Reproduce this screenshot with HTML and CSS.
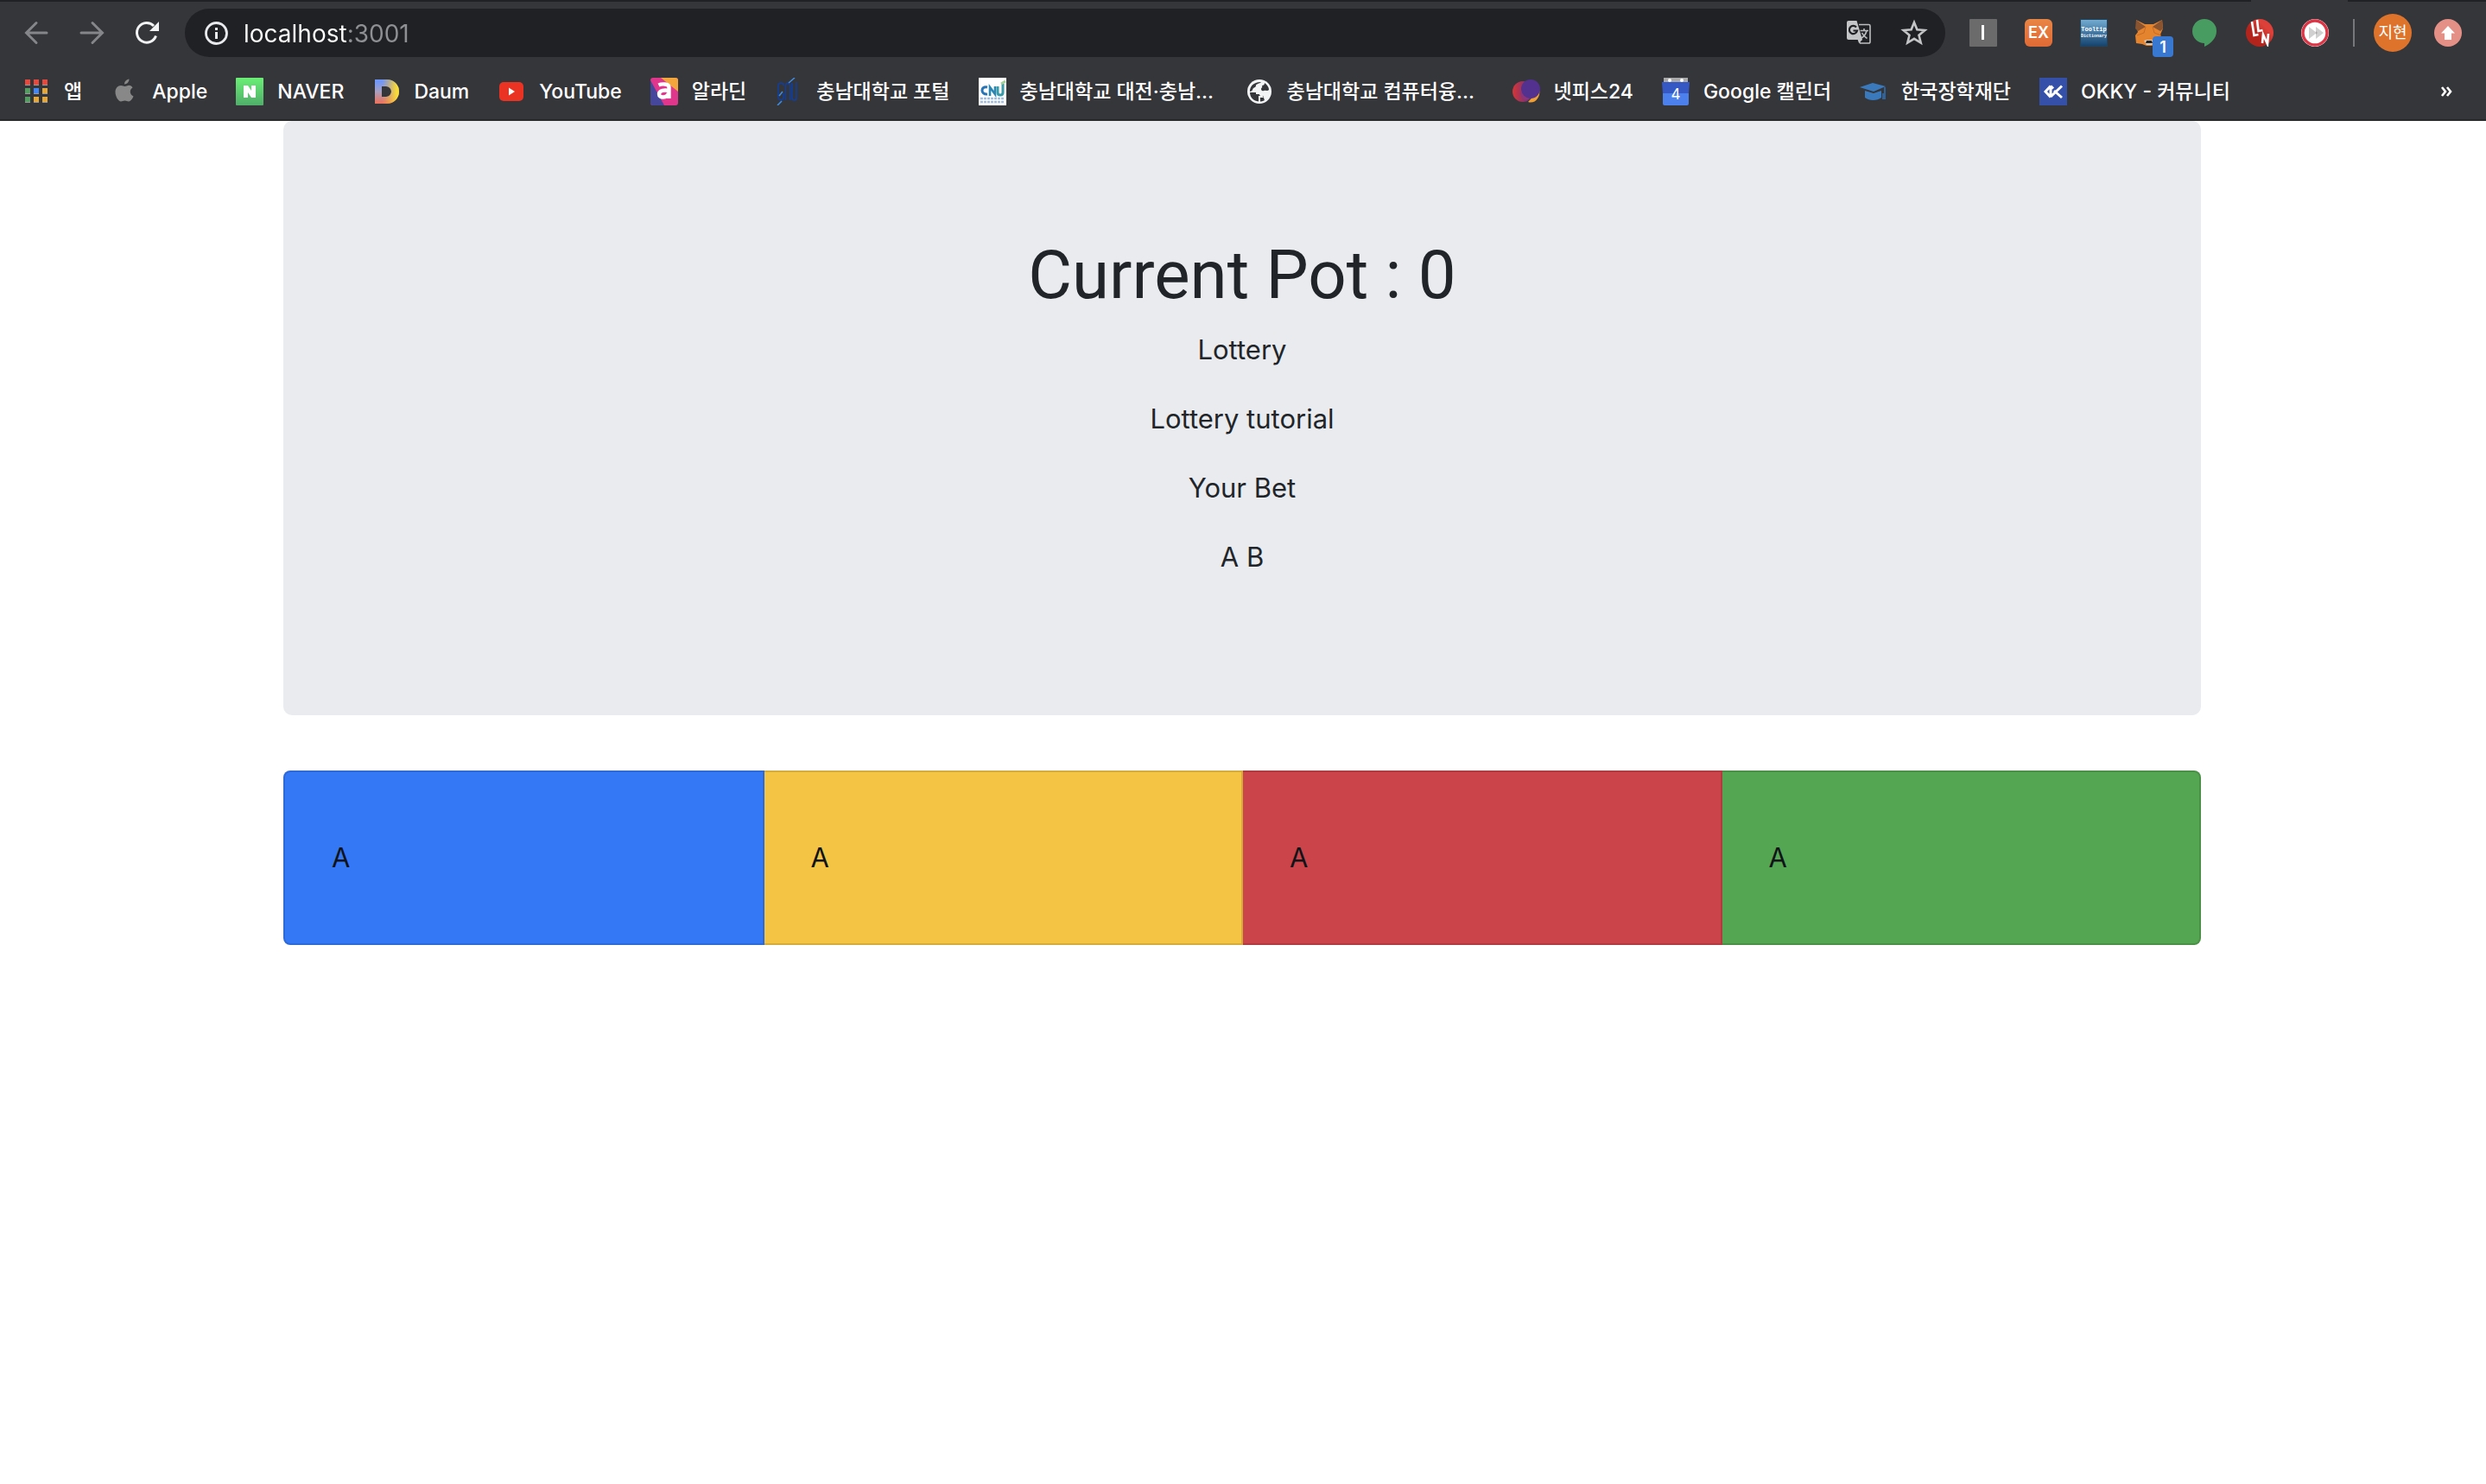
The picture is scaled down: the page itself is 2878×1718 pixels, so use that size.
FILE: index.html
```html
<!DOCTYPE html>
<html lang="ko">
<head>
<meta charset="utf-8">
<meta name="viewport" content="width=device-width, initial-scale=1">
<title>Lottery</title>
<link rel="stylesheet" href="styles.css">
</head>
<body>
<header class="browser">
  <div class="tabstrip"><div class="tab"></div></div>
  <div class="toolbar">
    <div class="nav">
      <button class="icon-btn" type="button" aria-label="Back"><svg class="icon dim" viewBox="0 0 32 32"><path d="M28 16H5M16 4.500 4.500 16 16 27.500"/></svg></button>
      <button class="icon-btn" type="button" aria-label="Forward"><svg class="icon dim" viewBox="0 0 32 32"><path d="M4 16h24M17 4.500 28.500 16 17 27.500"/></svg></button>
      <button class="icon-btn" type="button" aria-label="Reload"><svg class="icon" viewBox="0 0 32 32"><path d="M26.500 19.500A11.300 11.300 0 1 1 24 8" fill="none" stroke="#f1f3f4" stroke-width="3"/><path d="M30 3v11H19z" fill="#f1f3f4"/></svg></button>
    </div>
    <form class="omnibox">
      <button class="icon-btn" type="button" aria-label="Site information"><svg class="icon" viewBox="0 0 32 32"><circle cx="16.500" cy="16.500" r="12" fill="none" stroke="#e8eaed" stroke-width="2.800"/><path d="M15 10h3v3h-3zM15 15h3v8h-3z" fill="#e8eaed"/></svg></button>
      <input class="url" type="text" aria-label="Address" value="localhost:3001">
      <button class="icon-btn" type="button" aria-label="Translate"><svg class="icon" viewBox="0 0 32 32"><path d="M16 6.500h11.500a1.500 1.500 0 0 1 1.500 1.500v18.500a1.500 1.500 0 0 1-1.500 1.500H17.500l-2.500-5" fill="none" stroke="#bdbec0" stroke-width="1.600"/><path d="M4 2h9.500l6.500 22H4a2 2 0 0 1-2-2V4a2 2 0 0 1 2-2z" fill="#c4c5c7"/><path d="M13 9.500a4.600 4.600 0 1 0 1 4H9.500" fill="none" stroke="#202124" stroke-width="2.200"/><path d="M17.500 13.500H27M22 11v2.500M25 13.500c-1 4-3.500 7-6 8.500M19.500 16c1.500 3 3.500 5 6 6.500" fill="none" stroke="#bdbec0" stroke-width="1.600"/><path d="M15 24h5l-4 4z" fill="#c4c5c7"/></svg></button>
      <button class="icon-btn" type="button" aria-label="Bookmark this page"><svg class="icon" viewBox="0 0 32 32"><path d="m16 4 3.400 8.300 9 .7-6.900 5.800 2.200 8.700L16 22.800l-7.700 4.700 2.200-8.700L3.600 13l9-.7z" fill="none" stroke="#c4c5c7" stroke-width="2.600"/></svg></button>
    </form>
    <div class="extensions">
      <button class="icon-btn" type="button" aria-label="I"><svg class="icon" viewBox="0 0 32 32"><rect width="32" height="32" rx="1" fill="#6b6b6b"/><path d="M14 7h3v17h-3z" fill="#fff"/></svg></button>
      <button class="icon-btn ex" type="button">EX</button>
      <button class="icon-btn tip" type="button"><span>Tooltip</span><small>Dictionary</small></button>
      <button class="icon-btn fox" type="button" aria-label="MetaMask"><svg class="icon" viewBox="0 0 32 32"><path d="M1 1l10 5h10l10-5 1 10-3 7 2 9-7 2-5 2h-6l-5-2-7-1-1-9 3-4-2-6z" fill="#e5842f"/><path d="M1 1l11 8-9 5-3-3zM31 1l-11 8 9 5 3-3z" fill="#8a5430"/><path d="m12 9-2 7-8 3M20 9l2 7 8 3" fill="none" stroke="#c86a24"/><path d="M10 25l3 5h6l3-5-3-1h-6z" fill="#d8c8b8"/><path d="M13 25h6l1 3h-8z" fill="#222"/></svg><span class="badge">1</span></button>
      <button class="icon-btn" type="button" aria-label="Hangouts"><svg class="icon" viewBox="0 0 32 32"><path d="M16 0a14 14 0 0 1 14 14c0 8-6 14-14 18v-4A14 14 0 0 1 16 0z" fill="#489c61"/></svg></button>
      <button class="icon-btn" type="button" aria-label="LLN"><svg class="icon" viewBox="0 0 32 32"><defs><linearGradient id="lln" x1="1" y1="0" x2="0" y2="1"><stop offset=".3" stop-color="#dc4038"/><stop offset=".6" stop-color="#b3241c"/></linearGradient></defs><circle cx="16" cy="16" r="16" fill="url(#lln)"/><path d="m7 3 2.500 16 5-1M13 1l1.500 13 5-1M19 28l1-10 5 11 1-12" fill="none" stroke="#fff" stroke-width="2.600"/></svg></button>
      <button class="icon-btn" type="button" aria-label="Skip"><svg class="icon" viewBox="0 0 32 32"><circle cx="16" cy="16" r="16" fill="#fff"/><circle cx="16" cy="16" r="14" fill="#fff" stroke="#dc3545" stroke-width="3.400"/><path d="m9 9 9 7-9 7z" fill="#d0d0d0"/><path d="m17 9 9 7-9 7z" fill="#d0d0d0"/><path d="m17 14 2 2-2 2z" fill="#aaa"/></svg></button>
    </div>
    <div class="profile">
      <button class="avatar" type="button">지현</button>
      <button class="icon-btn" type="button" aria-label="Update"><svg class="icon" viewBox="0 0 32 32"><circle cx="16" cy="16" r="16" fill="#e49086"/><path d="m16 8 8 8.500h-4V24h-8v-7.500H8z" fill="#fff"/></svg></button>
    </div>
  </div>
  <nav class="bookmarks" aria-label="Bookmarks">
    <a class="bookmark" href="#"><svg class="icon" viewBox="0 0 32 32"><path d="M3 8h6v1H3zM13 8h6v1h-6zM23 8h6v1h-6zM3 18h6v1H3zM13 18h6v1h-6zM23 18h6v1h-6zM3 28h6v1H3zM13 28h6v1h-6zM23 28h6v1h-6z" fill="#999"/><path d="M3 2h6v6H3zM13 2h6v6h-6zM23 2h6v6h-6z" fill="#e8493e"/><path d="M3 12h6v6H3zM3 22h6v6H3z" fill="#549d60"/><path d="M13 12h6v6h-6z" fill="#4285f4"/><path d="M23 12h6v6h-6zM13 22h6v6h-6zM23 22h6v6h-6z" fill="#e5a73a"/></svg><span>앱</span></a>
    <a class="bookmark" href="#"><svg class="icon" viewBox="0 0 32 32"><path d="M21.500 1.500c.2 3-2.500 6-5.500 6 0-3 2.500-5.700 5.500-6zM25.500 11.500c-4 2.500-3.500 8 1 10-1.500 3.500-3.500 6-5.500 6-1.800 0-2.500-1-4.500-1s-3 1-4.500 1c-3 0-6.500-6-6.500-11 0-4.500 3-7.500 6.500-7.500 2 0 3.200 1 4.500 1s3-1.300 5-1.300c1.600 0 3 .8 4 2.800z" fill="#888"/></svg><span>Apple</span></a>
    <a class="bookmark" href="#"><svg class="icon" viewBox="0 0 32 32"><defs><linearGradient id="nv" x2="0" y2="1"><stop stop-color="#6aee75"/><stop offset="1" stop-color="#50ae69"/></linearGradient></defs><rect width="32" height="32" rx="1" fill="url(#nv)"/><path d="M9 9h5l4 6V9h5v14h-5l-4-6v6H9z" fill="#fff"/></svg><span>NAVER</span></a>
    <a class="bookmark" href="#"><svg class="icon" viewBox="0 0 32 32"><defs><linearGradient id="dm" x2="0" y2="1"><stop offset=".1" stop-color="#7198f8"/><stop offset=".5" stop-color="#a8a0c0"/><stop offset="1" stop-color="#f07058"/></linearGradient><linearGradient id="dn" x1="0" x2="1"><stop offset=".3" stop-color="#f5b030" stop-opacity="0"/><stop offset=".9" stop-color="#f8dc38"/></linearGradient></defs><path d="M3 2h14a14 14 0 0 1 0 28H3zM11 10v12h5a6 6 0 0 0 0-12z" fill="url(#dm)" fill-rule="evenodd"/><path d="M3 2h14a14 14 0 0 1 0 28H3zM11 10v12h5a6 6 0 0 0 0-12z" fill="url(#dn)" fill-rule="evenodd"/></svg><span>Daum</span></a>
    <a class="bookmark" href="#"><svg class="icon" viewBox="0 0 32 32"><rect x="2" y="5" width="28" height="22" rx="5" fill="#ea3323"/><path d="m13 11.500 7 4.500-7 4.500z" fill="#fff"/></svg><span>YouTube</span></a>
    <a class="bookmark" href="#"><svg class="icon" viewBox="0 0 32 32"><rect width="32" height="32" rx="3" fill="#e0368c"/><path d="M12 0h17a3 3 0 0 1 3 3v13z" fill="#f3a63c"/><path d="M0 3l16 29H3a3 3 0 0 1-3-3z" fill="#44479c"/><path d="M9.500 8.500c3-1.500 12-2 12 2.500v13M21 15c-4-1-11-.5-11 4s9 5 11-1" fill="none" stroke="#fff" stroke-width="4.400"/></svg><span>알라딘</span></a>
    <a class="bookmark" href="#"><svg class="icon" viewBox="0 0 32 32"><path d="M10 9c0-4-6-4-6 0v13c0 5 6 5 6 0v-4M12.500 26V10c0-5 5-5 5 0v16M20 6v17c0 4 5 4 5 0V5" fill="none" stroke="#173d8c" stroke-width="1.900"/><path d="m16 6 7-6M5 21l4-5M3 32l5-5" stroke="#3f8be0" stroke-width="1.600"/></svg><span>충남대학교 포털</span></a>
    <a class="bookmark" href="#"><svg class="icon" viewBox="0 0 32 32"><path d="M0 0h32v32H0z" fill="#fff"/><path d="M10 11c-8-2-8 9 0 8" fill="none" stroke="#2874b4" stroke-width="3"/><path d="M13 21V11l6 8v-9" fill="none" stroke="#2b86b4" stroke-width="2.600"/><path d="M22 10v7c0 4 6 4 6 0V7" fill="none" stroke="#3a9aa8" stroke-width="3"/><path d="m26 7 5-3" stroke="#a4cf98" stroke-width="3"/><path d="M2 24h28M2 28h28" stroke="#a5bddf" stroke-width="2.400" stroke-dasharray="3 1"/></svg><span class="clipped">충남대학교 대전·충남...</span></a>
    <a class="bookmark" href="#"><svg class="icon" viewBox="0 0 32 32"><circle cx="16" cy="16" r="14" fill="#f1f3f4"/><path d="M18 5c-2 2-6 2-6 4s-2 2-3 3-1 4-4 4C4.500 10 10 4.500 18 5zM5 17h7c3 0 5 2 5 4h3c1 0 1 3 2 5-7 4-17 0-17-9zM19 9c2 0 3-1 3-3 3 2 5 5 5 8-2 2-4 0-6 1s-3-1-3-2 2-2 1-4z" fill="#35363a"/><path d="M12 18h4l3 4h-3v6" fill="none" stroke="#f1f3f4" stroke-width="2"/></svg><span class="clipped">충남대학교 컴퓨터융...</span></a>
    <a class="bookmark" href="#"><svg class="icon" viewBox="0 0 32 32"><defs><linearGradient id="np"><stop stop-color="#d73535"/><stop offset="1" stop-color="#55318e"/></linearGradient></defs><path d="m18 28 13-14c2 8-5 17-13 14z" fill="#f0a035"/><circle cx="12" cy="16" r="12" fill="url(#np)"/><circle cx="21" cy="13" r="11" fill="#52318f"/><path d="M10 14a11 11 0 0 0 10 10c-6 5-13-2-10-10z" fill="#8c3578"/></svg><span>넷피스24</span></a>
    <a class="bookmark" href="#"><svg class="icon" viewBox="0 0 32 32"><path d="M2 0h28v6H2z" fill="#aaa"/><circle cx="9" cy="3" r="2" fill="#fff"/><circle cx="23" cy="3" r="2" fill="#fff"/><path d="M0 5h32l-1 13H1z" fill="#3658c4"/><path d="M1 18h30v12a2 2 0 0 1-2 2H3a2 2 0 0 1-2-2z" fill="#4c80ed"/><text class="cal" x="16" y="25" text-anchor="middle">4</text></svg><span>Google 캘린더</span></a>
    <a class="bookmark" href="#"><svg class="icon" viewBox="0 0 32 32"><path d="m0 11 15-5 15 4-14 6zM6 15l10 3 9-3v8c-5 4-14 4-19 0z" fill="#3b79bd"/><path d="M29 11v14M27 18v7" stroke="#2f639c" stroke-width="2"/></svg><span>한국장학재단</span></a>
    <a class="bookmark" href="#"><svg class="icon" viewBox="0 0 32 32"><path d="M0 0h32v32H0z" fill="#3550a8"/><path d="M13 9.500 7 16l6 6.500M26 9.500 13 22M17 15l9 8M13 9.500l3 3M13 10v12" fill="none" stroke="#fff" stroke-width="3"/></svg><span>OKKY - 커뮤니티</span></a>
    <button class="more" type="button" aria-label="More bookmarks"><svg class="icon" viewBox="0 0 32 32"><path d="m11 11 4 5-4 5M17 11l4 5-4 5" fill="none" stroke="#fff" stroke-width="2.600"/></svg></button>
  </nav>
</header>
<main class="container">
  <section class="jumbotron">
    <h1>Current Pot : 0</h1>
    <p>Lottery</p>
    <p>Lottery tutorial</p>
    <p>Your Bet</p>
    <p>A B</p>
  </section>
  <section class="card-group">
    <div class="card primary"><p>A</p></div>
    <div class="card warning"><p>A</p></div>
    <div class="card danger"><p>A</p></div>
    <div class="card success"><p>A</p></div>
  </section>
</main>
</body>
</html>
```
FILE: styles.css
```css
* { box-sizing: border-box; }

body {
  margin: 0;
  background: #fff;
  color: #212529;
  font-family: Inter, "Noto Sans CJK KR", sans-serif;
  font-size: 31px;
  line-height: 48px;
}

button {
  border: 0;
  padding: 0;
  background: none;
  color: inherit;
  font: inherit;
}

/* Browser chrome */
.browser {
  background: #35363a;
  border-bottom: 2px solid #28292b;
  color: #fff;
}

.tabstrip {
  display: flex;
  justify-content: flex-end;
  height: 2px;
  padding-right: 160px;
  background: #202124;
}

.tab { width: 112px; background: #35363a; }

.toolbar {
  display: flex;
  align-items: center;
  height: 72px;
  padding: 0 28px 0 26px;
}

.nav { display: flex; gap: 32px; margin-right: 28px; }

.icon, .icon-btn { display: block; width: 32px; height: 32px; flex: none; }

.dim path { fill: none; stroke: #85868a; stroke-width: 3; stroke-linecap: round; }

.omnibox {
  display: flex;
  flex: 1;
  align-items: center;
  gap: 32px;
  height: 56px;
  margin-right: 28px;
  padding: 0 20px;
  border-radius: 28px;
  background: #202124;
}

.url {
  flex: 1;
  min-width: 0;
  margin-left: -16px;
  padding: 2px 0 0;
  border: 0;
  outline: 0;
  color: #fff;
  font: 28px/40px Inter, sans-serif;
  background: linear-gradient(90deg, #fff 120px, #8f9093 120px);
  -webkit-background-clip: text;
  background-clip: text;
  -webkit-text-fill-color: transparent;
}

.extensions { display: flex; gap: 32px; }

.ex {
  border-radius: 6px;
  background: linear-gradient(#e88545, #e06a35);
  font-size: 18px;
  font-weight: 600;
  line-height: 32px;
}

.tip {
  display: flex;
  flex-direction: column;
  align-items: center;
  justify-content: center;
  overflow: hidden;
  border: 1px solid #24445c;
  background: linear-gradient(#72abd2, #154470);
  font-family: "Liberation Mono", monospace;
  font-size: 7px;
  font-weight: 700;
  line-height: 8px;
}

.tip small { font-size: 5px; }

.fox { position: relative; }

.badge {
  position: absolute;
  top: 20px;
  left: 20px;
  width: 24px;
  height: 24px;
  border-radius: 4px;
  background: #3878d0;
  font-size: 18px;
  font-weight: 600;
  line-height: 26px;
}

.profile {
  display: flex;
  align-items: center;
  gap: 26px;
  margin-left: 28px;
}

.profile::before { content: ""; width: 2px; height: 32px; background: #77787b; margin-right: -4px; }

.avatar {
  width: 44px;
  height: 44px;
  border-radius: 50%;
  background: #de732c;
  font-size: 18px;
  line-height: 44px;
}

.bookmarks {
  display: flex;
  align-items: center;
  gap: 33px;
  height: 64px;
  padding: 0 30px 0 26px;
  font-size: 23px;
  font-weight: 500;
  line-height: 32px;
}

.bookmark {
  display: flex;
  align-items: center;
  gap: 16px;
  color: #fff;
  text-decoration: none;
  white-space: nowrap;
}

.clipped { width: 228px; }

.cal { fill: #fff; font-size: 17px; font-weight: 400; }

.more { margin-left: auto; }

/* Page */
.container {
  max-width: 2280px;
  margin: 0 auto;
  padding: 0 31px 0 29px;
}

.jumbotron {
  margin-bottom: 64px;
  padding: 129px 64px 127px;
  border-radius: 10px;
  background: #e9ebef;
  text-align: center;
}

h1 {
  margin: 0 0 12px;
  font-family: Roboto, sans-serif;
  font-size: 78px;
  font-weight: 400;
  line-height: 100px;
}

.jumbotron p { margin: 0 0 32px; }

.card-group { display: flex; }

.card {
  flex: 1;
  padding: 75px 54px;
  border: 2px solid rgba(0, 0, 0, .125);
  color: #101418;
}

.card + .card { border-left: 0; }
.card:first-child { border-radius: 8px 0 0 8px; }
.card:last-child { border-radius: 0 8px 8px 0; }
.card p { margin: 0; }

.primary { background: #3478f6; }
.warning { background: #f4c444; }
.danger { background: #ca444a; }
.success { background: #55a652; }
```
